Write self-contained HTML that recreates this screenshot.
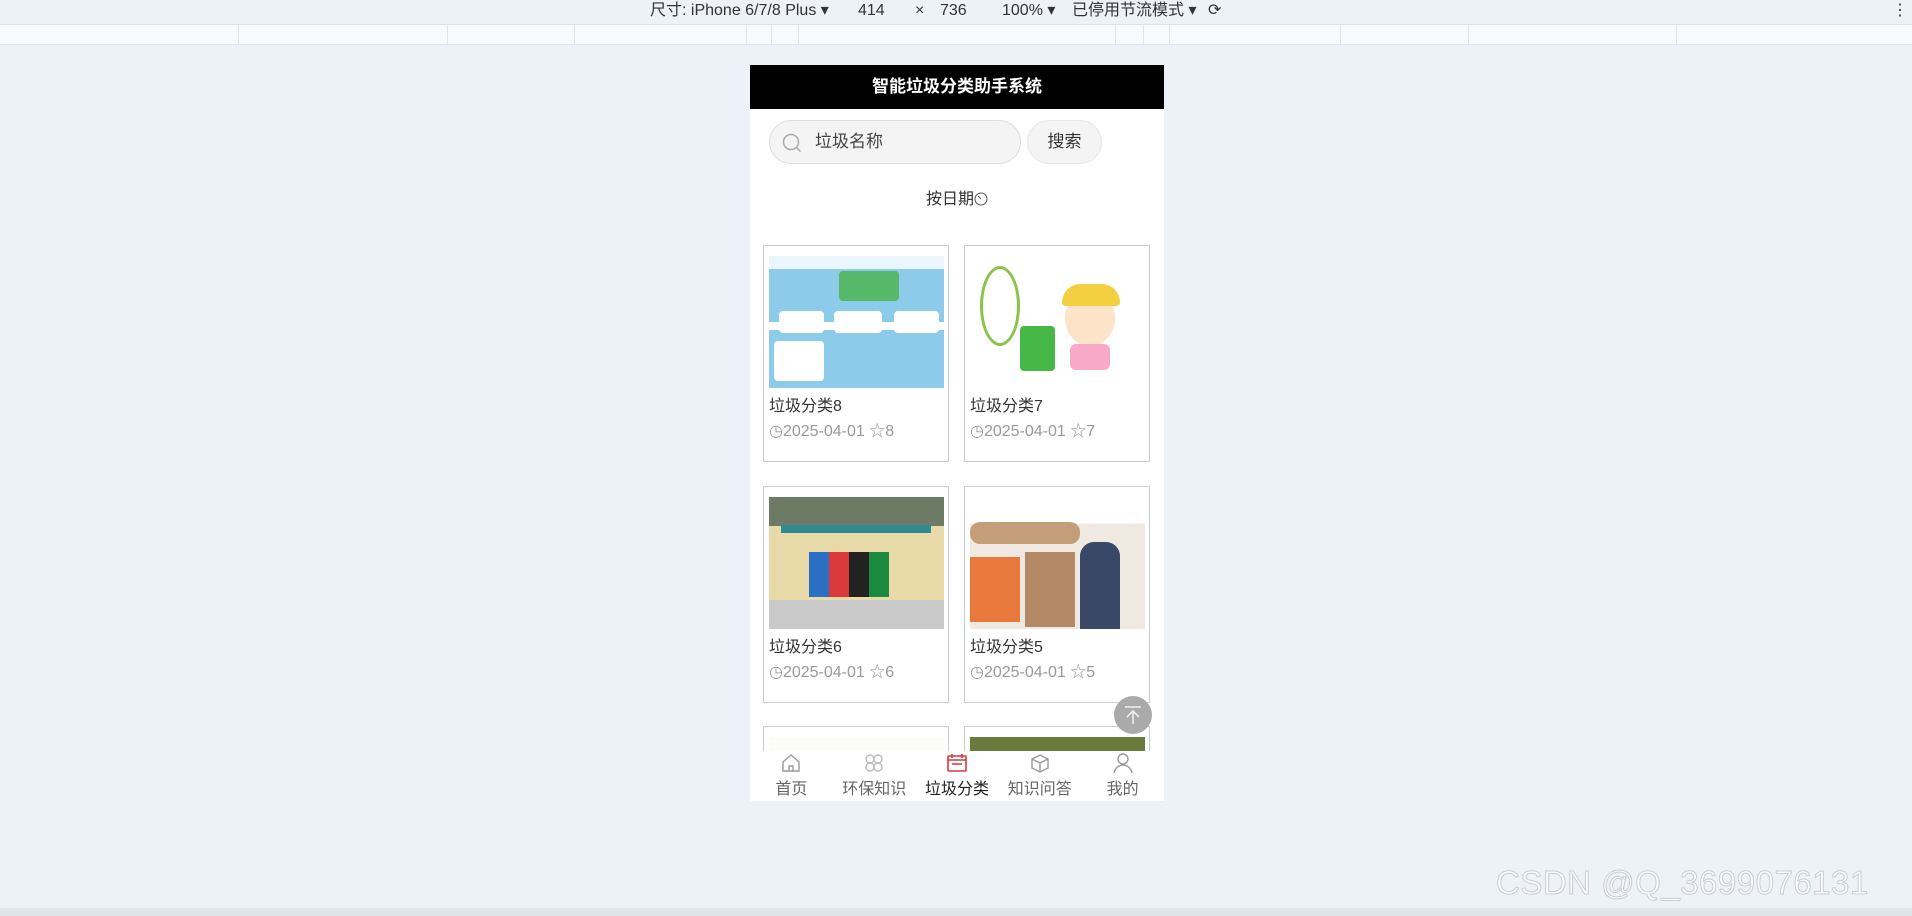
<!DOCTYPE html>
<html><head><meta charset="utf-8"><style>
*{margin:0;padding:0;box-sizing:border-box}
body{width:1912px;height:916px;background:#edf1f8;font-family:"Liberation Sans","Noto Sans CJK SC",sans-serif;position:relative;overflow:hidden;color:#333}
.tb{position:absolute;left:0;top:0;width:1912px;height:24px;background:#edf1f8;font-size:16px;color:#333}
.tb span{position:absolute;top:0;line-height:22px;height:22px}
.ruler{position:absolute;top:24px;left:0;width:1912px;height:21px;background:#f7f9fd;border-top:1px solid #dde2ea;border-bottom:1px solid #dde2ea}
.ruler i{position:absolute;top:0;height:20px;border-left:1px solid #dfe3ea}
.phone{position:absolute;left:750px;top:65px;width:414px;height:736px;background:#fff;overflow:hidden}
.hd{height:44px;background:#000;color:#fff;font-weight:bold;font-size:17px;text-align:center;line-height:44px}
.inp{position:absolute;left:19px;top:55px;width:252px;height:44px;border:1px solid #ddd;border-radius:22px;background:#f4f4f5;font-size:17px;color:#444;line-height:42px;padding-left:45px}
.btn{position:absolute;left:277px;top:55px;width:75px;height:44px;border:1px solid #e6e6e6;border-radius:22px;background:#f4f4f5;font-size:17px;line-height:42px;text-align:center;color:#333}
.sort{position:absolute;left:0;width:414px;top:120px;text-align:center;font-size:16px;color:#333}
.card{position:absolute;width:186px;height:217px;border:1px solid #ccc;background:#fff}
.img{position:absolute;left:5px;top:10px;width:175px;height:132px;overflow:hidden}
.t{position:absolute;left:5px;top:146px;font-size:16px;color:#333}
.m{position:absolute;left:5px;top:171px;font-size:16px;color:#999}
.nav{position:absolute;left:0;top:686px;width:414px;height:50px;background:#fff;display:flex}
.nav div{flex:1;text-align:center;font-size:16px;color:#666;padding-top:1px}
.nav svg{display:block;margin:0 auto 1px}
.top{position:absolute;left:1114px;top:696px;width:38px;height:38px;border-radius:50%;background:#aaa}
</style></head><body>
<div class="tb"><span style="left:650px">尺寸: iPhone 6/7/8 Plus ▾</span><span style="left:858px">414</span><span style="left:915px">×</span><span style="left:940px">736</span><span style="left:1002px">100% ▾</span><span style="left:1072px">已停用节流模式 ▾</span><span style="left:1208px">⟳</span><span style="left:1892px">⋮</span></div>
<div class="ruler"><i style="left:238px"></i><i style="left:447px"></i><i style="left:574px"></i><i style="left:746px"></i><i style="left:771px"></i><i style="left:798px"></i><i style="left:1115px"></i><i style="left:1143px"></i><i style="left:1169px"></i><i style="left:1340px"></i><i style="left:1468px"></i><i style="left:1676px"></i></div>
<div class="phone">
<div class="hd">智能垃圾分类助手系统</div>
<div class="inp"><svg style="position:absolute;left:12px;top:12px" width="20" height="20" viewBox="0 0 20 20"><circle cx="9" cy="9" r="7.5" fill="none" stroke="#aaa" stroke-width="1.5"/><path d="M14.5 14.5l4 4" stroke="#aaa" stroke-width="1.5"/></svg>垃圾名称</div>
<div class="btn">搜索</div>
<div class="sort">按日期<svg width="14" height="14" viewBox="0 0 14 14" style="vertical-align:-2px"><circle cx="7" cy="7" r="6" fill="none" stroke="#555" stroke-width="1"/><path d="M7 7L4 4" stroke="#555"/></svg></div>

<div class="card" style="left:13px;top:180px"><div class="img" style="background:linear-gradient(180deg,#eaf6fb 0 10%,#8ccbea 10% 50%,#fff 50% 56%,#8ccbea 56%)"><div style="position:absolute;left:10px;top:55px;width:45px;height:22px;background:#fff;border-radius:4px"></div><div style="position:absolute;left:65px;top:55px;width:48px;height:22px;background:#fff;border-radius:4px"></div><div style="position:absolute;left:125px;top:55px;width:45px;height:22px;background:#fff;border-radius:4px"></div><div style="position:absolute;left:70px;top:15px;width:60px;height:30px;background:#58b86a;border-radius:4px"></div><div style="position:absolute;left:5px;top:85px;width:50px;height:40px;background:#fff;border-radius:4px"></div></div><div class="t">垃圾分类8</div><div class="m">◷2025-04-01 ☆8</div></div>
<div class="card" style="left:214px;top:180px"><div class="img" style="background:#fff"><div style="position:absolute;left:50px;top:70px;width:35px;height:45px;background:#46b848;border-radius:4px"></div><div style="position:absolute;left:95px;top:35px;width:50px;height:55px;background:#fde3c8;border-radius:50%"></div><div style="position:absolute;left:92px;top:28px;width:58px;height:22px;background:#f4d040;border-radius:20px 20px 4px 4px"></div><div style="position:absolute;left:100px;top:88px;width:40px;height:26px;background:#f7a9c5;border-radius:6px"></div><div style="position:absolute;left:10px;top:10px;width:40px;height:80px;border:3px solid #8bc34a;border-radius:50%"></div></div><div class="t">垃圾分类7</div><div class="m">◷2025-04-01 ☆7</div></div>
<div class="card" style="left:13px;top:421px"><div class="img" style="background:linear-gradient(180deg,#6d7a66 0 22%,#e8d9a8 22% 78%,#c9c9c9 78%)"><div style="position:absolute;left:12px;top:28px;width:150px;height:8px;background:#2f8b92"></div><div style="position:absolute;left:40px;top:55px;width:80px;height:45px;background:linear-gradient(90deg,#2a6fc4 0 25%,#d9393a 25% 50%,#222 50% 75%,#1b8a3e 75%)"></div></div><div class="t">垃圾分类6</div><div class="m">◷2025-04-01 ☆6</div></div>
<div class="card" style="left:214px;top:421px"><div class="img" style="background:linear-gradient(180deg,#fff 0 20%,#efe9e1 20%)"><div style="position:absolute;left:0;top:60px;width:50px;height:65px;background:#e8783c"></div><div style="position:absolute;left:55px;top:55px;width:50px;height:75px;background:#b48a66"></div><div style="position:absolute;left:110px;top:45px;width:40px;height:87px;background:#3a4868;border-radius:14px 14px 0 0"></div><div style="position:absolute;left:0;top:25px;width:110px;height:22px;background:#c49e78;border-radius:10px"></div></div><div class="t">垃圾分类5</div><div class="m">◷2025-04-01 ☆5</div></div>
<div class="card" style="left:13px;top:661px"><div class="img" style="background:#fdfdf8"></div></div>
<div class="card" style="left:214px;top:661px"><div class="img" style="background:#6a7a3c"></div></div>

<div class="nav">
<div><svg width="22" height="22" viewBox="0 0 22 22"><path d="M3 10L11 3l8 7v9H3z M9 19v-5h4v5" fill="none" stroke="#999" stroke-width="1.4"/></svg>首页</div>
<div><svg width="22" height="22" viewBox="0 0 22 22" fill="none" stroke="#bbb" stroke-width="1.4"><circle cx="7" cy="7" r="4"/><circle cx="15" cy="7" r="4"/><circle cx="7" cy="15" r="4"/><circle cx="15" cy="15" r="4"/></svg>环保知识</div>
<div style="color:#222"><svg width="22" height="22" viewBox="0 0 22 22" fill="none" stroke="#d9363e" stroke-width="1.6"><rect x="2" y="4" width="18" height="15" rx="1"/><path d="M2 8h18M6 2v4M16 2v4M6 12h10"/></svg>垃圾分类</div>
<div><svg width="22" height="22" viewBox="0 0 22 22" fill="none" stroke="#999" stroke-width="1.4"><path d="M3 7l8-4 8 4v9l-8 4-8-4zM3 7l8 4 8-4M11 11v9"/></svg>知识问答</div>
<div><svg width="22" height="22" viewBox="0 0 22 22" fill="none" stroke="#999" stroke-width="1.4"><circle cx="11" cy="7" r="5"/><path d="M2 21c1-5 5-8 9-8s8 3 9 8"/></svg>我的</div>
</div>
</div>
<div class="top"><svg width="38" height="38" viewBox="0 0 38 38" fill="none" stroke="#eee" stroke-width="1.6"><path d="M11 11h16M19 28V15M13 21l6-6 6 6"/></svg></div>
<div style="position:absolute;left:1496px;top:864px;font-size:33px;color:rgba(255,255,255,.85);letter-spacing:0.5px;-webkit-text-stroke:1px #c8ccd3">CSDN @Q_3699076131</div>
<div style="position:absolute;left:0;top:908px;width:1912px;height:8px;background:#dfe3ea"></div>
</body></html>
